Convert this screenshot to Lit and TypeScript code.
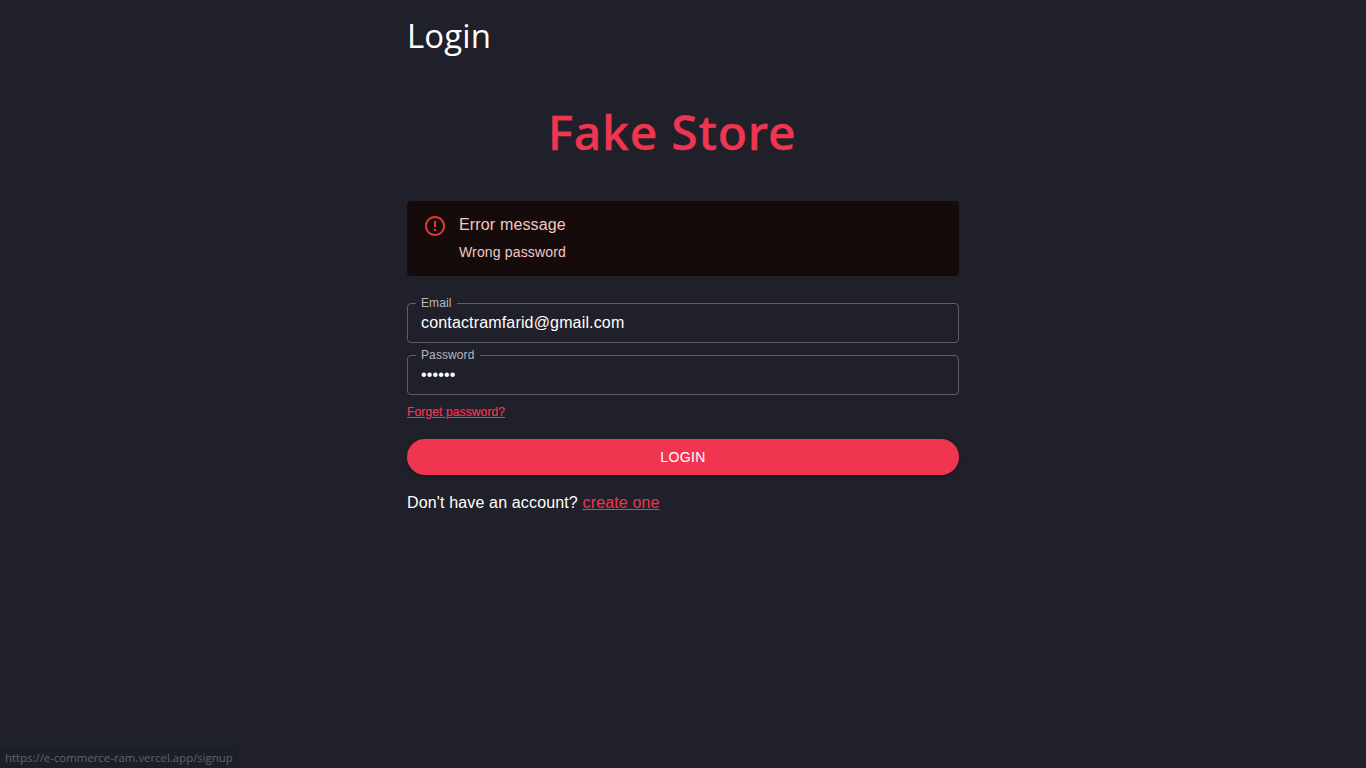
import { LitElement, html, css } from "lit";
import { customElement } from "lit/decorators.js";

@customElement("app-root")
export class AppRoot extends LitElement {
  static styles = css`
    :host { display: block; min-height: 768px; background: #1f2029; color: #fff; font-family: "Liberation Sans", Arial, sans-serif; position: relative; overflow: hidden; }
    .wrap { width: 552px; margin: 0 auto; height: 768px; box-sizing: border-box; }
    h1.page { margin: 0; padding-top: 14px; font: 400 33px/44px "Open Sans", "Noto Sans", sans-serif; letter-spacing: 0.1px; height: 44px; }
    .brand { margin: 41px 0 0; padding-right: 22px; text-align: center; color: #f03551; font: 500 48px/66px "Noto Sans", "Open Sans", sans-serif; letter-spacing: 0.8px; -webkit-text-stroke: 0.4px #f03551; height: 66px; }
    .alert { margin-top: 36px; height: 75px; box-sizing: border-box; background: #160b0b; border-radius: 4px; padding: 14px 16px; display: flex; gap: 12px; color: #f4c7c7; }
    .alert svg { width: 24px; height: 24px; flex: none; margin-top: -1px; color: #e53935; }
    .alert .t { font-size: 16px; line-height: 20px; letter-spacing: .15px; }
    .alert .m { font-size: 14px; line-height: 20px; margin-top: 7px; letter-spacing: .15px; }
    .field { position: relative; height: 40px; box-sizing: border-box; display: flex; align-items: center; padding: 0 14px; font-size: 16px; }
    .field span { letter-spacing: .16px; }
    .field fieldset { position: absolute; inset: -5px 0 0 0; margin: 0; padding: 0 8px; border: 1px solid #5f6066; border-radius: 4px; pointer-events: none; }
    .field legend { font-size: 12px; line-height: 11px; padding: 0 5px; color: #b9b9bd; height: 11px; letter-spacing: .1px; }
    .email { margin-top: 27px; }
    .pass { margin-top: 12px; }
    .forget { display: block; margin-top: 10px; font-size: 12px; line-height: 14px; color: #f03551; text-decoration: underline; letter-spacing: .13px; -webkit-text-stroke: .2px #f03551; }
    .btn { margin-top: 20px; height: 36px; border-radius: 18px; background: #f03551; color: #fff; font-size: 14px; display: flex; align-items: center; justify-content: center; letter-spacing: .4px; box-shadow: 0 3px 1px -2px rgba(0,0,0,.2), 0 2px 2px rgba(0,0,0,.14), 0 1px 5px rgba(0,0,0,.12); }
    .foot { margin-top: 18px; font-size: 16px; line-height: 19px; letter-spacing: .15px; }
    .foot a { color: #f03551; text-decoration: underline; }
    .status { position: absolute; left: 0; bottom: 0; height: 20px; width: 238px; box-sizing: border-box; padding: 0 5px; background: #1c1f26; color: #5e6570; font: 11.4px/20px "Open Sans", "Noto Sans", sans-serif; border-top-right-radius: 3px; white-space: nowrap; }
  `;

  render() {
    return html`
      <div class="wrap">
        <h1 class="page">Login</h1>
        <div class="brand">Fake Store</div>
        <div class="alert">
          <svg viewBox="0 0 24 24" fill="currentColor"><path d="M11 15h2v2h-2zm0-8h2v6h-2zm.99-5C6.47 2 2 6.48 2 12s4.47 10 9.99 10C17.52 22 22 17.52 22 12S17.52 2 11.99 2zM12 20c-4.42 0-8-3.58-8-8s3.58-8 8-8 8 3.58 8 8-3.58 8-8 8z"/></svg>
          <div>
            <div class="t">Error message</div>
            <div class="m">Wrong password</div>
          </div>
        </div>
        <div class="field email">
          <fieldset><legend>Email</legend></fieldset>
          <span>contactramfarid@gmail.com</span>
        </div>
        <div class="field pass">
          <fieldset><legend>Password</legend></fieldset>
          <span>••••••</span>
        </div>
        <a class="forget">Forget password?</a>
        <div class="btn">LOGIN</div>
        <div class="foot">Don't have an account? <a>create one</a></div>
      </div>
      <div class="status">https://e-commerce-ram.vercel.app/signup</div>
    `;
  }
}
